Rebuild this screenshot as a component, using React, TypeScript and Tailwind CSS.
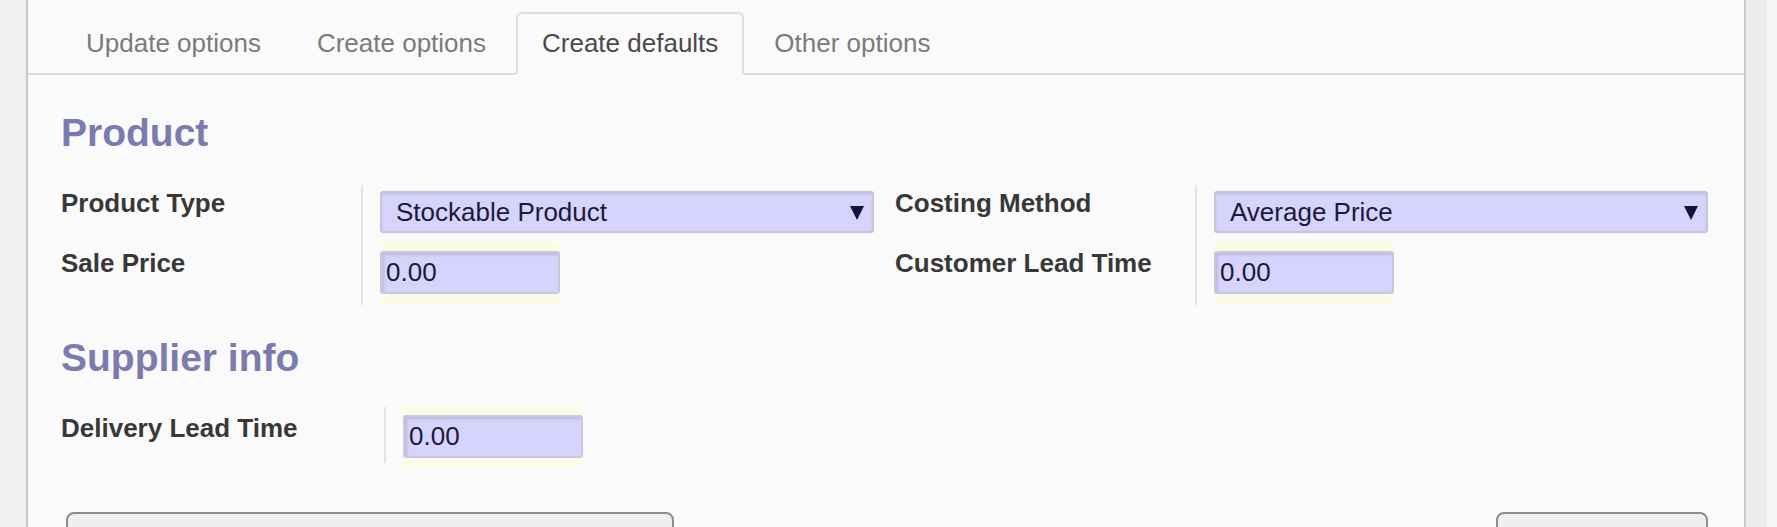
const tabs = ["Update options", "Create options", "Create defaults", "Other options"]
const activeTab = "Create defaults"

function Caret() {
  return (
    <svg width="14" height="15" viewBox="0 0 14 15" className="shrink-0">
      <polygon points="0,1 14,1 7,15" fill="#15123a" />
    </svg>
  )
}

function SelectField({ value }: { value: string }) {
  return (
    <div className="flex h-[42px] items-center justify-between rounded-[3px] border-2 border-[#c6c4da] bg-[#d6d3fd] pl-[14px] pr-[8px] text-[26px] leading-[37px] text-[#1c1a3a] shadow-[inset_0_2px_2px_rgba(0,0,0,0.08)]">
      <span>{value}</span>
      <Caret />
    </div>
  )
}

function NumberField({ value }: { value: string }) {
  return (
    <div className="flex h-[43px] w-[180px] items-center rounded-[3px] border-2 border-[#cac8de] bg-[#d6d3fd] pl-[4px] text-[26px] leading-[37px] text-[#1c1a3a] shadow-[inset_2px_2px_3px_rgba(0,0,0,0.12),0_-10px_0_#fbfbe7,0_10px_0_#fbfbe7]">
      {value}
    </div>
  )
}

function Row({
  label,
  labelW = "w-[302px]",
  labelPad = "",
  h = "h-[60px]",
  children,
}: {
  label: string
  labelW?: string
  labelPad?: string
  h?: string
  children: React.ReactNode
}) {
  return (
    <div className={`flex ${h}`}>
      <div className={`${labelW} ${labelPad} shrink-0 border-r-2 border-[#e3e3e3] text-[26px] font-bold leading-[37px] text-[#383838]`}>
        {label}
      </div>
      <div className="flex-1 pl-[17px] pr-[21px] pt-[6px]">{children}</div>
    </div>
  )
}

function Heading({ children }: { children: React.ReactNode }) {
  return (
    <div className="text-[39px] font-bold leading-[43px] text-[#7c7bad]">{children}</div>
  )
}

export default function App() {
  return (
    <div className="flex h-[527px] overflow-hidden bg-[#f0f0f0] font-['Liberation_Sans',Arial,sans-serif]">
      <div className="w-[26px] shrink-0" />

      <div className="flex-1 border-x-2 border-[#c9c9c9] bg-[#fafafa]">
        {/* Tabs */}
        <div className="flex border-b-2 border-[#dddddd] pl-[32px] pt-[12px]">
          {tabs.map((t) => (
            <div
              key={t}
              className={
                t === activeTab
                  ? "-mb-[2px] mr-[4px] rounded-t-[6px] border-2 border-[#dddddd] border-b-[#fafafa] bg-[#fafafa] px-[24px] py-[11px] text-[26px] leading-[37px] text-[#4a4a4a]"
                  : "-mb-[2px] mr-[4px] border-2 border-transparent px-[24px] py-[11px] text-[26px] leading-[37px] text-[#7b7b7b]"
              }
            >
              {t}
            </div>
          ))}
        </div>

        <div className="pl-[33px] pr-[15px]">
          <div className="mt-[36px]">
            <Heading>Product</Heading>
          </div>

          <div className="mt-[31px] grid grid-cols-2">
            <div className="flex flex-col">
              <Row label="Product Type">
                <SelectField value="Stockable Product" />
              </Row>
              <Row label="Sale Price">
                <NumberField value="0.00" />
              </Row>
            </div>
            <div className="flex flex-col">
              <Row label="Costing Method">
                <SelectField value="Average Price" />
              </Row>
              <Row label="Customer Lead Time">
                <NumberField value="0.00" />
              </Row>
            </div>
          </div>

          <div className="mt-[31px]">
            <Heading>Supplier info</Heading>
          </div>

          <div className="mt-[28px]">
            <Row label="Delivery Lead Time" labelW="w-[325px]" labelPad="pt-[3px]" h="h-[56px]">
              <div className="pt-[2px]">
                <NumberField value="0.00" />
              </div>
            </Row>
          </div>

          {/* Footer buttons (cut off by the viewport) */}
          <div className="mt-[49px] flex justify-between pl-[5px] pr-[21px]">
            <div className="h-[44px] w-[608px] rounded-[8px] border-2 border-[#8c8c8c] bg-[#efefef]" />
            <div className="h-[44px] w-[212px] rounded-[8px] border-2 border-[#8c8c8c] bg-[#efefef]" />
          </div>
        </div>
      </div>

      <div className="flex w-[31px] shrink-0">
        <div className="flex-1 bg-[#ececec]" />
        <div className="w-[10px] bg-[#f6f6f6]" />
      </div>
    </div>
  )
}
